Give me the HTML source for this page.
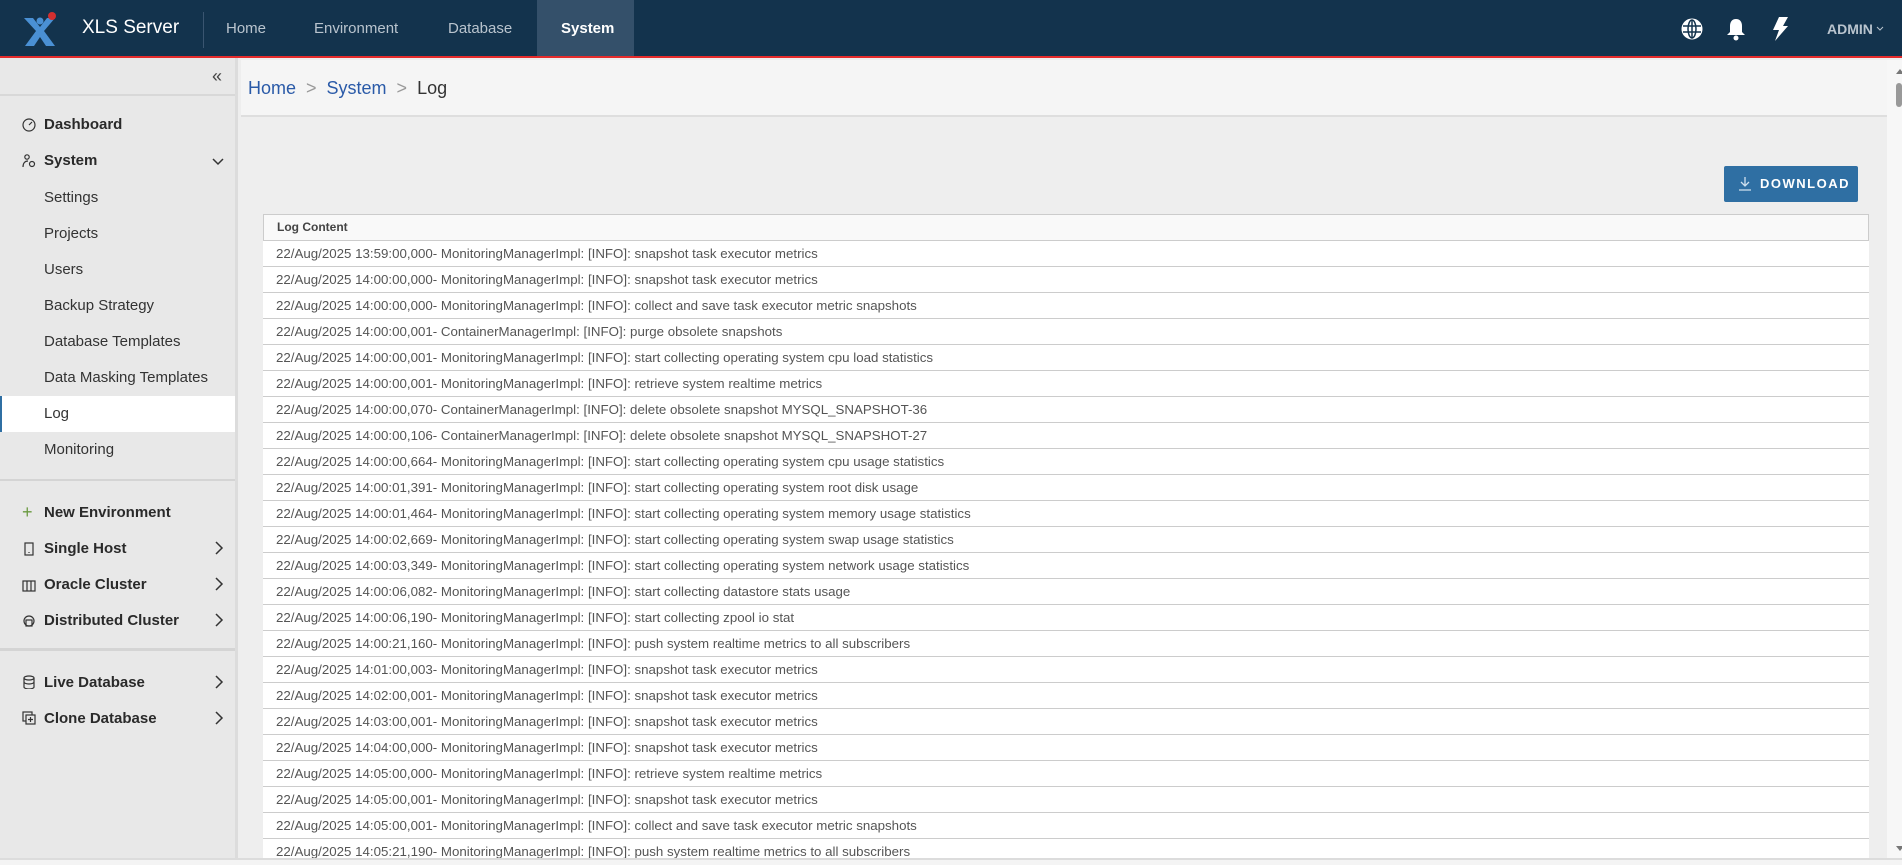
<!DOCTYPE html>
<html><head><meta charset="utf-8"><style>
*{box-sizing:border-box;margin:0;padding:0}
body{width:1902px;height:865px;overflow:hidden;background:#eeeeee;font-family:"Liberation Sans",sans-serif;position:relative}
.hdr{position:absolute;left:0;top:0;width:1902px;height:58px;background:#13334d;border-bottom:2px solid #e52b2b}
.hdr .t{position:absolute;color:#b9c4ce;font-size:15px;top:20px}
.side{position:absolute;left:0;top:58px;width:238px;height:800px;background:#e8e8e8;border-right:3px solid #dcdcdc}
.it{position:absolute;left:44px;font-size:15px;color:#333}
.b{font-weight:bold;color:#2a2a2a}
.ic{position:absolute;left:22px;width:14px;height:14px}
.chev{position:absolute;left:214px;width:10px;height:14px}
.row{position:absolute;left:263px;width:1606px;height:26px;background:#fff;border-bottom:1px solid #ccc;font-size:13.3px;color:#555;line-height:25px;padding-left:13px;white-space:nowrap}
</style></head><body>
<div class="hdr">
<svg style="position:absolute;left:22px;top:12px" width="36" height="36" viewBox="0 0 36 36"><path d="M2 6h9l7 9 7-9h8L22 19l11 15h-9l-6-9-6 9H3l11-15z" fill="#4a90d4"/><circle cx="30" cy="4" r="4" fill="#d32f2f"/><circle cx="18" cy="9" r="3.5" fill="#4a90d4"/></svg>
<div style="position:absolute;left:82px;top:17px;color:#fff;font-size:19px">XLS Server</div>
<div style="position:absolute;left:203px;top:12px;width:1px;height:36px;background:#3a5570"></div>
<div class="t" style="left:226px">Home</div>
<div class="t" style="left:314px">Environment</div>
<div class="t" style="left:448px">Database</div>
<div style="position:absolute;left:537px;top:0;width:97px;height:56px;background:#34506a"></div>
<div class="t" style="left:561px;color:#fff;font-weight:bold">System</div>
<svg style="position:absolute;left:1681px;top:18px" width="22" height="22" viewBox="0 0 22 22" fill="none" stroke="#fff" stroke-width="2"><circle cx="11" cy="11" r="9.5" fill="#fff"/><g stroke="#13334d" stroke-width="1.5"><ellipse cx="11" cy="11" rx="4" ry="9"/><path d="M2 8h18M2 14h18M11 2v18"/></g></svg>
<svg style="position:absolute;left:1726px;top:17px" width="20" height="24" viewBox="0 0 20 24"><path d="M10 2c4 0 6 3 6 7v6l3 3H1l3-3V9c0-4 2-7 6-7z" fill="#fff"/><circle cx="10" cy="21" r="2.5" fill="#fff"/></svg>
<svg style="position:absolute;left:1771px;top:17px" width="18" height="24" viewBox="0 0 18 24"><path d="M8 0h9l-5 9h5L4 24l4-11H2z" fill="#fff"/></svg>
<div class="t" style="left:1827px;font-weight:bold;font-size:14px;top:21px">ADMIN</div>
<svg style="position:absolute;left:1876px;top:26px" width="8" height="6" viewBox="0 0 8 6" fill="none" stroke="#b9c4ce" stroke-width="1"><path d="M1 1l3 3 3-3"/></svg>
</div>

<div class="side">
<div style="position:absolute;left:212px;top:8px;font-size:18px;color:#444">«</div>
<div style="position:absolute;left:0;top:36px;width:235px;height:2px;background:#d8d8d8"></div>
<svg class="ic" style="top:60px" viewBox="0 0 14 14" fill="none" stroke="#333" stroke-width="1.2"><circle cx="7" cy="7" r="6"/><path d="M7 7l3-3"/></svg>
<div class="it b" style="top:58px">Dashboard</div>
<svg class="ic" style="top:96px" viewBox="0 0 14 14" fill="none" stroke="#333" stroke-width="1.2"><circle cx="5" cy="3" r="2.2"/><path d="M1 13c0-4 2-6 5-6"/><circle cx="10" cy="10" r="2.5"/></svg>
<div class="it b" style="top:94px">System</div>
<svg style="position:absolute;left:212px;top:100px" width="12" height="8" viewBox="0 0 12 8" fill="none" stroke="#333" stroke-width="1.5"><path d="M1 1l5 5 5-5"/></svg>
<div class="it" style="top:131px">Settings</div>
<div class="it" style="top:167px">Projects</div>
<div class="it" style="top:203px">Users</div>
<div class="it" style="top:239px">Backup Strategy</div>
<div class="it" style="top:275px">Database Templates</div>
<div class="it" style="top:311px">Data Masking Templates</div>
<div style="position:absolute;left:0;top:338px;width:235px;height:36px;background:#fff;border-left:2px solid #2f6fa3"></div>
<div class="it" style="top:347px">Log</div>
<div class="it" style="top:383px">Monitoring</div>
<div style="position:absolute;left:0;top:421px;width:235px;height:2px;background:#d4d4d4"></div>
<div style="position:absolute;left:22px;top:444px;color:#6a9a40;font-size:18px">+</div>
<div class="it b" style="top:446px">New Environment</div>
<svg class="ic" style="top:484px" viewBox="0 0 14 14" fill="none" stroke="#333" stroke-width="1.2"><rect x="3" y="1" width="8" height="12"/><path d="M7 10v1"/></svg>
<div class="it b" style="top:482px">Single Host</div>
<svg class="chev" style="top:483px" viewBox="0 0 10 14" fill="none" stroke="#333" stroke-width="1.5"><path d="M2 1l6 6-6 6"/></svg>
<svg class="ic" style="top:520px" viewBox="0 0 14 14" fill="none" stroke="#333" stroke-width="1.2"><rect x="1" y="3" width="12" height="10"/><path d="M5 3v10M9 3v10"/></svg>
<div class="it b" style="top:518px">Oracle Cluster</div>
<svg class="chev" style="top:519px" viewBox="0 0 10 14" fill="none" stroke="#333" stroke-width="1.5"><path d="M2 1l6 6-6 6"/></svg>
<svg class="ic" style="top:556px" viewBox="0 0 14 14" fill="none" stroke="#333" stroke-width="1.2"><circle cx="7" cy="7" r="5"/><rect x="4" y="6" width="6" height="6"/></svg>
<div class="it b" style="top:554px">Distributed Cluster</div>
<svg class="chev" style="top:555px" viewBox="0 0 10 14" fill="none" stroke="#333" stroke-width="1.5"><path d="M2 1l6 6-6 6"/></svg>
<div style="position:absolute;left:0;top:590px;width:235px;height:3px;background:#d4d4d4"></div>
<svg class="ic" style="top:617px" viewBox="0 0 14 14" fill="none" stroke="#333" stroke-width="1.2"><ellipse cx="7" cy="3" rx="5" ry="2"/><path d="M2 3v9c0 1 2 2 5 2s5-1 5-2V3M2 7c0 1 2 2 5 2s5-1 5-2"/></svg>
<div class="it b" style="top:616px">Live Database</div>
<svg class="chev" style="top:617px" viewBox="0 0 10 14" fill="none" stroke="#333" stroke-width="1.5"><path d="M2 1l6 6-6 6"/></svg>
<svg class="ic" style="top:653px" viewBox="0 0 14 14" fill="none" stroke="#333" stroke-width="1.2"><rect x="1" y="1" width="9" height="9"/><rect x="4" y="4" width="9" height="9" fill="#e8e8e8"/><path d="M8.5 6v5M6 8.5h5"/></svg>
<div class="it b" style="top:652px">Clone Database</div>
<svg class="chev" style="top:653px" viewBox="0 0 10 14" fill="none" stroke="#333" stroke-width="1.5"><path d="M2 1l6 6-6 6"/></svg>
</div>

<div style="position:absolute;left:241px;top:60px;width:1646px;height:57px;background:#f5f5f5;border-bottom:2px solid #dedede"></div>
<div style="position:absolute;left:248px;top:78px;font-size:18px;color:#999"><span style="color:#2a5aa8">Home</span> &nbsp;&gt;&nbsp; <span style="color:#2a5aa8">System</span> &nbsp;&gt;&nbsp; <span style="color:#333">Log</span></div>

<div style="position:absolute;left:1724px;top:166px;width:134px;height:36px;background:#2f6fa3;border-radius:2px;color:#fff;font-size:13px;font-weight:bold;letter-spacing:1.5px;line-height:36px;padding-left:36px">DOWNLOAD</div>
<svg style="position:absolute;left:1738px;top:176px" width="14" height="15" viewBox="0 0 14 15" fill="none" stroke="#cfe0ef" stroke-width="1.3"><path d="M7 1v9M3 6l4 4 4-4M1 14h12"/></svg>

<div style="position:absolute;left:263px;top:214px;width:1606px;height:27px;background:#f9f9f9;border:1px solid #ccc;font-size:12px;font-weight:bold;color:#444;padding-left:13px;line-height:25px">Log Content</div>
<div style="position:absolute;left:263px;top:241px;width:1606px;height:620px;border-left:1px solid #ccc;border-right:1px solid #ccc;background:#fff"></div>
<div class="row" style="top:241px">22/Aug/2025 13:59:00,000- MonitoringManagerImpl: [INFO]: snapshot task executor metrics</div>
<div class="row" style="top:267px">22/Aug/2025 14:00:00,000- MonitoringManagerImpl: [INFO]: snapshot task executor metrics</div>
<div class="row" style="top:293px">22/Aug/2025 14:00:00,000- MonitoringManagerImpl: [INFO]: collect and save task executor metric snapshots</div>
<div class="row" style="top:319px">22/Aug/2025 14:00:00,001- ContainerManagerImpl: [INFO]: purge obsolete snapshots</div>
<div class="row" style="top:345px">22/Aug/2025 14:00:00,001- MonitoringManagerImpl: [INFO]: start collecting operating system cpu load statistics</div>
<div class="row" style="top:371px">22/Aug/2025 14:00:00,001- MonitoringManagerImpl: [INFO]: retrieve system realtime metrics</div>
<div class="row" style="top:397px">22/Aug/2025 14:00:00,070- ContainerManagerImpl: [INFO]: delete obsolete snapshot MYSQL_SNAPSHOT-36</div>
<div class="row" style="top:423px">22/Aug/2025 14:00:00,106- ContainerManagerImpl: [INFO]: delete obsolete snapshot MYSQL_SNAPSHOT-27</div>
<div class="row" style="top:449px">22/Aug/2025 14:00:00,664- MonitoringManagerImpl: [INFO]: start collecting operating system cpu usage statistics</div>
<div class="row" style="top:475px">22/Aug/2025 14:00:01,391- MonitoringManagerImpl: [INFO]: start collecting operating system root disk usage</div>
<div class="row" style="top:501px">22/Aug/2025 14:00:01,464- MonitoringManagerImpl: [INFO]: start collecting operating system memory usage statistics</div>
<div class="row" style="top:527px">22/Aug/2025 14:00:02,669- MonitoringManagerImpl: [INFO]: start collecting operating system swap usage statistics</div>
<div class="row" style="top:553px">22/Aug/2025 14:00:03,349- MonitoringManagerImpl: [INFO]: start collecting operating system network usage statistics</div>
<div class="row" style="top:579px">22/Aug/2025 14:00:06,082- MonitoringManagerImpl: [INFO]: start collecting datastore stats usage</div>
<div class="row" style="top:605px">22/Aug/2025 14:00:06,190- MonitoringManagerImpl: [INFO]: start collecting zpool io stat</div>
<div class="row" style="top:631px">22/Aug/2025 14:00:21,160- MonitoringManagerImpl: [INFO]: push system realtime metrics to all subscribers</div>
<div class="row" style="top:657px">22/Aug/2025 14:01:00,003- MonitoringManagerImpl: [INFO]: snapshot task executor metrics</div>
<div class="row" style="top:683px">22/Aug/2025 14:02:00,001- MonitoringManagerImpl: [INFO]: snapshot task executor metrics</div>
<div class="row" style="top:709px">22/Aug/2025 14:03:00,001- MonitoringManagerImpl: [INFO]: snapshot task executor metrics</div>
<div class="row" style="top:735px">22/Aug/2025 14:04:00,000- MonitoringManagerImpl: [INFO]: snapshot task executor metrics</div>
<div class="row" style="top:761px">22/Aug/2025 14:05:00,000- MonitoringManagerImpl: [INFO]: retrieve system realtime metrics</div>
<div class="row" style="top:787px">22/Aug/2025 14:05:00,001- MonitoringManagerImpl: [INFO]: snapshot task executor metrics</div>
<div class="row" style="top:813px">22/Aug/2025 14:05:00,001- MonitoringManagerImpl: [INFO]: collect and save task executor metric snapshots</div>
<div class="row" style="top:839px;height:20px;border-bottom:none;overflow:hidden;line-height:25px">22/Aug/2025 14:05:21,190- MonitoringManagerImpl: [INFO]: push system realtime metrics to all subscribers</div>

<div style="position:absolute;left:1887px;top:60px;width:15px;height:799px;background:#f7f7f7"></div>
<div style="position:absolute;left:1896px;top:69px;width:0;height:0;border-left:4px solid transparent;border-right:4px solid transparent;border-bottom:5px solid #777"></div>
<div style="position:absolute;left:1896px;top:83px;width:6px;height:24px;background:#999;border-radius:3px"></div>
<div style="position:absolute;left:1896px;top:846px;width:0;height:0;border-left:4px solid transparent;border-right:4px solid transparent;border-top:5px solid #777"></div>
<div style="position:absolute;left:0;top:858px;width:1902px;height:7px;background:#f4f4f4;border-top:2px solid #dcdcdc"></div>
</body></html>
